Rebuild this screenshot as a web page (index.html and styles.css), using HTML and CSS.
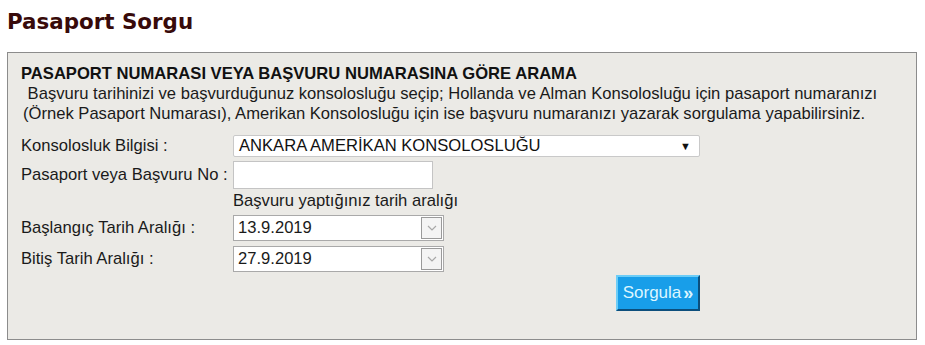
FILE: index.html
```html
<!DOCTYPE html>
<html lang="tr">
<head>
<meta charset="utf-8">
<title>Pasaport Sorgu</title>
<link rel="stylesheet" href="styles.css">
</head>
<body>
<h1 class="title">Pasaport Sorgu</h1>
<div class="panel">
  <div class="heading">PASAPORT NUMARASI VEYA BAŞVURU NUMARASINA GÖRE ARAMA</div>
  <div class="desc">&nbsp;Başvuru tarihinizi ve başvurduğunuz konsolosluğu seçip; Hollanda ve Alman Konsolosluğu için pasaport numaranızı<br>(Örnek Pasaport Numarası), Amerikan Konsolosluğu için ise başvuru numaranızı yazarak sorgulama yapabilirsiniz.</div>
  <div class="form">
    <div class="label r1">Konsolosluk Bilgisi :</div>
    <div class="field r1">
      <div class="select"><span>ANKARA AMERİKAN KONSOLOSLUĞU</span><span class="caret">&#9660;</span></div>
    </div>
    <div class="label r2">Pasaport veya Başvuru No :</div>
    <div class="field r2"><div class="textbox"></div></div>
    <div class="label"></div>
    <div class="field hint">Başvuru yaptığınız tarih aralığı</div>
    <div class="label r4">Başlangıç Tarih Aralığı :</div>
    <div class="field r4">
      <div class="date"><span class="date-val">13.9.2019</span><span class="date-btn"><svg width="10" height="6" viewBox="0 0 10 6"><path d="M1 1 L5 5 L9 1" fill="none" stroke="#a8a8a8" stroke-width="1.2"/></svg></span></div>
    </div>
    <div class="label r5">Bitiş Tarih Aralığı :</div>
    <div class="field r5">
      <div class="date"><span class="date-val">27.9.2019</span><span class="date-btn"><svg width="10" height="6" viewBox="0 0 10 6"><path d="M1 1 L5 5 L9 1" fill="none" stroke="#a8a8a8" stroke-width="1.2"/></svg></span></div>
    </div>
    <div class="label"></div>
    <div class="field actions"><button class="btn" type="button">Sorgula<b class="raquo">»</b></button></div>
  </div>
</div>
</body>
</html>
```
FILE: styles.css
```css
html, body {
  margin: 0;
  padding: 0;
  background: #ffffff;
}
body {
  padding: 0 8px 0 7px;
  font-family: "Liberation Sans", Arial, sans-serif;
  color: #1a1a1a;
}
.title {
  margin: 0;
  padding: 10px 0 0 0;
  height: 52px;
  box-sizing: border-box;
  font-family: "DejaVu Sans", Verdana, sans-serif;
  font-weight: bold;
  font-size: 21.4px;
  line-height: 24px;
  color: #380a0a;
}
.panel {
  border: 1px solid #8c8c8c;
  background: #ebeae6;
  height: 288px;
  box-sizing: border-box;
  padding: 11px 13px 0 13px;
}
.heading {
  font-weight: bold;
  font-size: 16.6px;
  line-height: 20px;
  color: #111;
}
.desc {
  font-size: 16.6px;
  line-height: 20px;
  padding-left: 2px;
  color: #1a1a1a;
}
.form {
  margin-top: 11px;
  display: grid;
  grid-template-columns: 212px 1fr;
  align-items: center;
  font-size: 16.6px;
}
.label {
  color: #1a1a1a;
}
.r1 { margin-bottom: 4px; }
.r4 { margin-bottom: 5px; }
.r5 { margin-bottom: 3px; }
.select {
  width: 467px;
  height: 22px;
  box-sizing: border-box;
  background: #fff;
  border: 1px solid #c9c9c9;
  border-radius: 2px;
  display: flex;
  align-items: center;
  justify-content: space-between;
  padding: 0 8px 0 5px;
  font-size: 16.6px;
  color: #111;
}
.caret {
  font-size: 11px;
  color: #111;
}
.textbox {
  width: 200px;
  height: 28px;
  box-sizing: border-box;
  background: #fff;
  border: 1px solid #c4c4c4;
}
.hint {
  height: 26px;
  line-height: 24px;
}
.date {
  width: 211px;
  height: 26px;
  box-sizing: border-box;
  background: #fff;
  border: 1px solid #a9a9a9;
  display: flex;
  align-items: center;
  justify-content: space-between;
  padding: 0 1px 0 4px;
}
.date-btn {
  width: 21px;
  height: 22px;
  box-sizing: border-box;
  border: 1px solid #9a9a9a;
  background: #f4f4f4;
  display: flex;
  align-items: center;
  justify-content: center;
}
.actions {
  display: flex;
  justify-content: flex-end;
  width: 467px;
}
.btn {
  width: 84px;
  height: 36px;
  box-sizing: border-box;
  background: #189ee9;
  border-style: solid;
  border-width: 2px;
  border-color: #6ccdf7 #0c4f7c #0c4f7c #6ccdf7;
  color: #dcf6ff;
  font-family: "Liberation Sans", Arial, sans-serif;
  font-size: 17px;
  padding: 0;
  display: flex;
  align-items: center;
  justify-content: center;
}
.raquo {
  font-size: 18px;
  margin-left: 2px;
}
```
